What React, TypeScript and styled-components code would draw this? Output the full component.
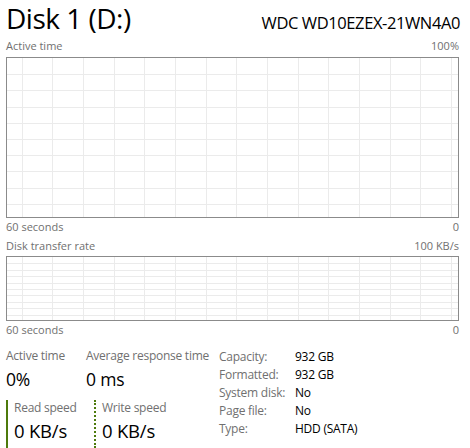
import React from "react"
import styled, { createGlobalStyle } from "styled-components"

const GlobalStyle = createGlobalStyle`
  html, body {
    margin: 0;
    padding: 0;
    background: #ffffff;
  }
  body {
    font-family: "Open Sans", "Noto Sans", sans-serif;
    color: #000000;
  }
`

const GRID = "#ebebeb"
const DISK = "#4da60c"
const DISK_DARK = "#4d7a0c"

const Page = styled.div`
  width: 470px;
  height: 448px;
  box-sizing: border-box;
  padding: 0 11px 0 6px;
  overflow: hidden;
  display: flex;
  flex-direction: column;
`

const Header = styled.div`
  height: 38px;
  display: flex;
  justify-content: space-between;
  align-items: baseline;
`

const Title = styled.div`
  font-size: 28px;
  line-height: 36px;
  letter-spacing: -0.5px;
  white-space: nowrap;
`

const Model = styled.div`
  font-size: 16.5px;
  line-height: 36px;
  letter-spacing: -0.4px;
  margin-right: -1px;
  white-space: nowrap;
`

const AxisRow = styled.div<{ $top: number; $bottom?: number }>`
  height: 15px;
  margin-top: ${(p) => p.$top}px;
  margin-bottom: ${(p) => p.$bottom || 0}px;
  display: flex;
  justify-content: space-between;
  font-size: 11px;
  line-height: 15px;
  color: #707070;
`

const ChartFrame = styled.div<{ $height: number }>`
  height: ${(p) => p.$height}px;
  border: 1px solid #8b8b8b;
  box-sizing: border-box;
  position: relative;
  overflow: hidden;
  svg {
    display: block;
  }
`

const Stats = styled.div`
  margin-top: 10px;
  display: flex;
`

const LeftStats = styled.div`
  width: 213px;
  display: flex;
  flex-direction: column;
`

const StatRow = styled.div`
  display: flex;
`

const Stat = styled.div<{ $width: number }>`
  width: ${(p) => p.$width}px;
  display: flex;
  flex-direction: column;
`

const StatLabel = styled.div`
  font-size: 12px;
  line-height: 18px;
  color: #707070;
  white-space: nowrap;
  letter-spacing: -0.25px;
`

const StatValue = styled.div`
  font-size: 17.5px;
  line-height: 24px;
  white-space: nowrap;
  margin-top: 2px;
  letter-spacing: -0.2px;
`

const SpeedBlock = styled.div<{ $dotted?: boolean; $width: number }>`
  width: ${(p) => p.$width}px;
  box-sizing: border-box;
  margin-top: 9px;
  padding-left: 6px;
  border-left: 2px ${(p) => (p.$dotted ? "dotted" : "solid")} ${DISK_DARK};
  display: flex;
  flex-direction: column;
  height: 48px;
`

const SpeedLabel = styled(StatLabel)`
  line-height: 16px;
`

const SpeedValue = styled.div`
  font-size: 18.5px;
  line-height: 26px;
  white-space: nowrap;
  margin-top: 2px;
  letter-spacing: -0.2px;
`

const InfoTable = styled.div`
  display: grid;
  grid-template-columns: 76px auto;
  grid-auto-rows: 18px;
  font-size: 12px;
  line-height: 18px;
  margin-top: 1px;
`

const InfoLabel = styled.div`
  color: #707070;
  letter-spacing: -0.25px;
  white-space: nowrap;
`

const InfoValue = styled.div`
  color: #000000;
  letter-spacing: -0.25px;
  white-space: nowrap;
`

const Grid = ({ width, height, rows }: { width: number; height: number; rows: number }) => {
  const cols: number[] = []
  for (let x = 14.7; x < width; x += 30.67) cols.push(Math.round(x) + 0.5)
  const hs: number[] = []
  for (let i = 1; i < rows; i++) hs.push(Math.round((height * i) / rows) + 0.5)
  return (
    <>
      {cols.map((x) => (
        <line key={"v" + x} x1={x} y1={0} x2={x} y2={height} stroke={GRID} strokeWidth={1} />
      ))}
      {hs.map((y) => (
        <line key={"h" + y} x1={0} y1={y} x2={width} y2={y} stroke={GRID} strokeWidth={1} />
      ))}
    </>
  )
}

const ActiveChart = () => {
  const w = 451
  const h = 162
  return (
    <svg width={w} height={h}>
      <Grid width={w} height={h} rows={10} />
      <path d={`M261 ${h} Q268 ${h - 3} 276 ${h} Z`} fill={DISK} fillOpacity={0.35} stroke="#7f9a50" strokeWidth={1} />
      <path d={`M408 ${h} Q414 ${h - 3} 420 ${h} Z`} fill={DISK} fillOpacity={0.35} stroke="#7f9a50" strokeWidth={1} />
    </svg>
  )
}

const TransferChart = () => {
  const w = 451
  const h = 64
  return (
    <svg width={w} height={h}>
      <Grid width={w} height={h} rows={10} />
    </svg>
  )
}

const info = [
  ["Capacity:", "932 GB"],
  ["Formatted:", "932 GB"],
  ["System disk:", "No"],
  ["Page file:", "No"],
  ["Type:", "HDD (SATA)"],
]

export default function App() {
  return (
    <>
      <GlobalStyle />
      <Page>
        <Header>
          <Title>Disk 1 (D:)</Title>
          <Model>WDC WD10EZEX-21WN4A0</Model>
        </Header>
        <AxisRow $top={0} $bottom={4}>
          <span>Active time</span>
          <span>100%</span>
        </AxisRow>
        <ChartFrame $height={164}>
          <ActiveChart />
        </ChartFrame>
        <AxisRow $top={1}>
          <span>60 seconds</span>
          <span>0</span>
        </AxisRow>
        <AxisRow $top={4} $bottom={3}>
          <span>Disk transfer rate</span>
          <span>100 KB/s</span>
        </AxisRow>
        <ChartFrame $height={66}>
          <TransferChart />
        </ChartFrame>
        <AxisRow $top={1}>
          <span>60 seconds</span>
          <span>0</span>
        </AxisRow>
        <Stats>
          <LeftStats>
            <StatRow>
              <Stat $width={80}>
                <StatLabel>Active time</StatLabel>
                <StatValue>0%</StatValue>
              </Stat>
              <Stat $width={133}>
                <StatLabel>Average response time</StatLabel>
                <StatValue>0 ms</StatValue>
              </Stat>
            </StatRow>
            <StatRow>
              <SpeedBlock $width={88}>
                <SpeedLabel>Read speed</SpeedLabel>
                <SpeedValue>0 KB/s</SpeedValue>
              </SpeedBlock>
              <SpeedBlock $width={100} $dotted>
                <SpeedLabel>Write speed</SpeedLabel>
                <SpeedValue>0 KB/s</SpeedValue>
              </SpeedBlock>
            </StatRow>
          </LeftStats>
          <InfoTable>
            {info.map(([k, v]) => (
              <React.Fragment key={k}>
                <InfoLabel>{k}</InfoLabel>
                <InfoValue>{v}</InfoValue>
              </React.Fragment>
            ))}
          </InfoTable>
        </Stats>
      </Page>
    </>
  )
}
